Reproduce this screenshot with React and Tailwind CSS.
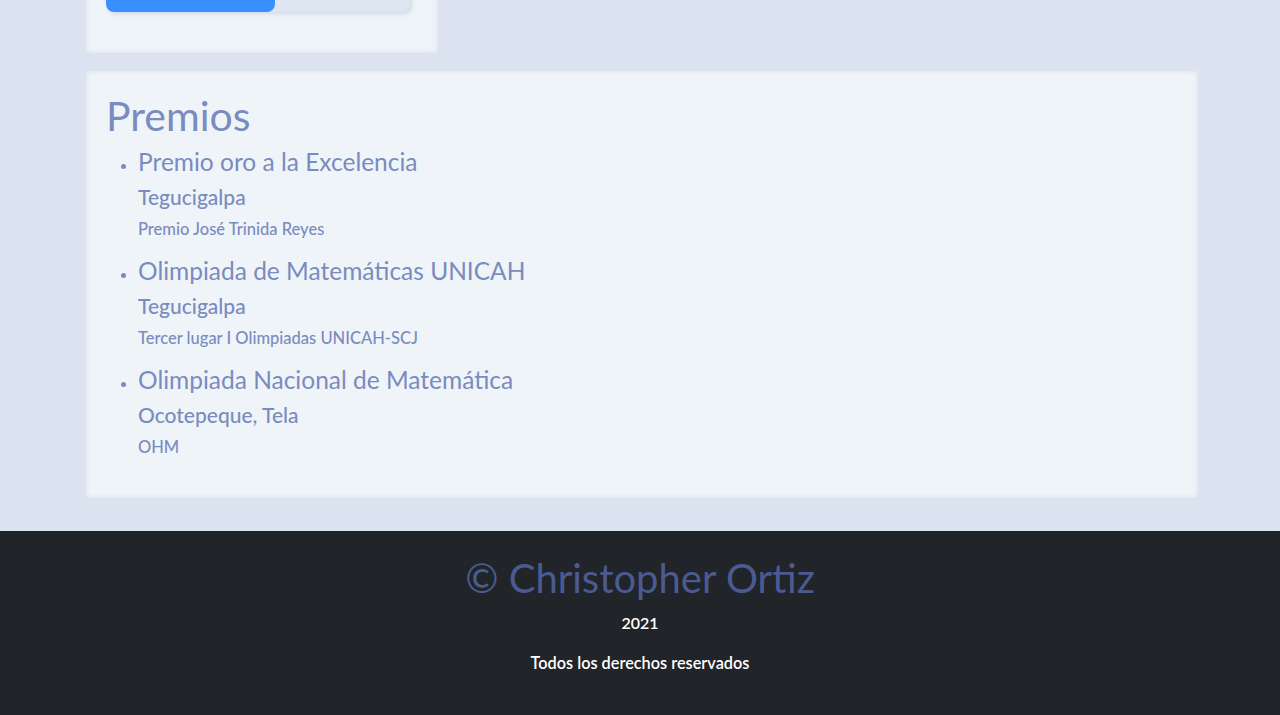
import React from "react";

const premios = [
  {
    titulo: "Premio oro a la Excelencia",
    lugar: "Tegucigalpa",
    detalle: "Premio José Trinida Reyes",
  },
  {
    titulo: "Olimpiada de Matemáticas UNICAH",
    lugar: "Tegucigalpa",
    detalle: "Tercer lugar I Olimpiadas UNICAH-SCJ",
  },
  {
    titulo: "Olimpiada Nacional de Matemática",
    lugar: "Ocotepeque, Tela",
    detalle: "OHM",
  },
];

const card =
  "bg-[#eff4f9] rounded-[3px] shadow-[inset_0_0_5px_rgba(120,130,150,0.18)]";

const App = () => {
  return (
    <div className="bg-[#dbe3f1] font-['Lato','Noto_Sans',sans-serif]">
      <div className="w-[1140px] mx-auto px-[15px]">
        {/* tarjeta de habilidades (cortada por el scroll) */}
        <div className={`${card} w-[352px] -mt-[28px] pt-[20px] pb-[41px] px-[20px] ml-[1px]`}>
          <div className="w-[304px] h-[20px] rounded-lg bg-[#dde5f1] shadow-[2px_2px_4px_rgba(150,165,190,0.35)]">
            <div className="w-[169px] h-full rounded-lg bg-[#3a8eff]" />
          </div>
        </div>

        {/* premios */}
        <div className={`${card} mt-[18px] ml-[1px] w-[1112px] pt-[21px] px-[20px] pb-[41px]`}>
          <h1 className="text-[41px] leading-[48px] mb-[7px] text-[#7a8bbf]">Premios</h1>
          <ul className="list-disc pl-[32px] text-[#7a8bbf] marker:text-[16px]">
            {premios.map((p, i) => (
              <li key={i} className={i > 0 ? "mt-[17px]" : ""}>
                <h3 className="text-[24.5px] leading-[30px] mb-[8px]">{p.titulo}</h3>
                <h5 className="text-[21px] leading-[24px] mb-[10px] font-medium">{p.lugar}</h5>
                <h6 className="text-[16.5px] leading-[20px] font-medium">{p.detalle}</h6>
              </li>
            ))}
          </ul>
        </div>
      </div>

      <footer className="mt-[33px] bg-[#212429] text-center pt-[23px] pb-[40px]">
        <h1 className="text-[40px] leading-[48px] text-[#4b5b91]">© Christopher Ortiz</h1>
        <p className="mt-[9px] text-[16px] leading-[24px] text-white font-semibold">2021</p>
        <p className="mt-[16px] text-[16.3px] leading-[24px] text-white font-semibold">
          Todos los derechos reservados
        </p>
      </footer>
    </div>
  );
};

export default App;
